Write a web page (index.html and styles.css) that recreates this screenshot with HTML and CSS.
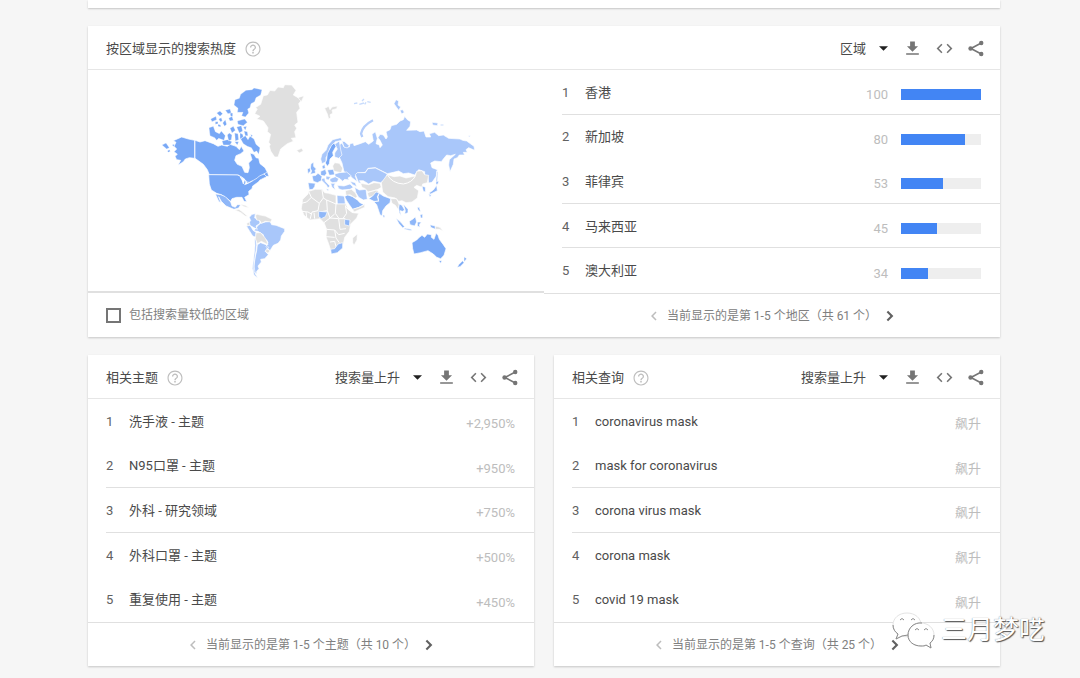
FILE: index.html
```html
<!DOCTYPE html>
<html lang="zh-CN">
<head>
<meta charset="utf-8">
<meta name="viewport" content="width=device-width, initial-scale=1">
<title>搜索热度</title>
<link rel="stylesheet" href="styles.css">
</head>
<body>
<svg class="sprite" aria-hidden="true">
  <symbol id="help" viewBox="0 0 24 24"><path d="M11 18h2v-2h-2v2zm1-16C6.480 2 2 6.480 2 12s4.480 10 10 10 10-4.480 10-10S17.520 2 12 2zm0 18.500c-4.700 0-8.500-3.800-8.500-8.500s3.800-8.500 8.500-8.500 8.500 3.800 8.500 8.500-3.800 8.500-8.500 8.500zM12 6c-2.210 0-4 1.790-4 4h1.700c0-1.300 1-2.300 2.300-2.300s2.300 1 2.300 2.300c0 2-3.100 1.750-3.100 5h1.700c0-2.250 3.100-2.500 3.100-5 0-2.210-1.790-4-4-4z"/></symbol>
  <symbol id="download" viewBox="0 0 24 24"><path d="M19 9h-4V3H9v6H5l7 7 7-7zM4 18v2h16v-2H4z"/></symbol>
  <symbol id="code" viewBox="0 0 24 24"><path d="M9.400 16.600L4.800 12l4.600-4.600L8 6l-6 6 6 6 1.400-1.400zm5.200 0l4.600-4.600-4.600-4.600L16 6l6 6-6 6-1.400-1.400z"/></symbol>
  <symbol id="share" viewBox="0 0 24 24"><path d="M5 12L18 5M5 12l13 7" fill="none" stroke="currentColor" stroke-width="2"/><circle cx="18" cy="5" r="2.800"/><circle cx="4.500" cy="12" r="2.800"/><circle cx="18" cy="19" r="2.800"/></symbol>
  <symbol id="prev" viewBox="0 0 24 24"><path d="M15.400 7.400L14 6l-6 6 6 6 1.400-1.400-4.600-4.600z"/></symbol>
  <symbol id="next" viewBox="0 0 24 24"><path d="M9.500 5L7.500 7l5 5-5 5 2 2 7-7z"/></symbol>
  <symbol id="caret" viewBox="0 0 10 5"><path d="M0 0h10L5 5z"/></symbol>
</svg>

<main class="page">
  <section class="card card-tail"></section>

  <section class="card">
    <header class="card-head">
      <h2>按区域显示的搜索热度</h2>
      <button class="help" aria-label="帮助"><svg><use href="#help"/></svg></button>
      <div class="tools">
        <span class="picker"><select aria-label="区域"><option>区域</option></select><svg><use href="#caret"/></svg></span>
        <button class="icon" aria-label="下载"><svg><use href="#download"/></svg></button>
        <button class="icon" aria-label="嵌入"><svg><use href="#code"/></svg></button>
        <button class="icon" aria-label="分享"><svg><use href="#share"/></svg></button>
      </div>
    </header>
    <div class="region">
      <div class="map">
        <svg viewBox="-186 -17 1368 663" role="img" aria-label="世界地图">
          <!-- North America and Greenland -->
          <g class="hi">
            <path d="M72 212L78 200 70 195 95 184 115 190 134 194V248L118 246 106 250 100 258 84 269 92 254 80 252 75 242 82 236 72 228 80 220z"/>
            <path d="M135 194L150 199 165 195 190 204 204 212 215 208 232 212 240 206 258 212 268 222 274 212 282 226 272 234 258 240 254 254 262 266 276 272 284 290 294 291 298 276 296 262 306 252 300 232 312 236 318 246 326 248 330 264 345 276 352 290 340 296 345 300 318 314 294 325 285 312 265 298 178 297 172 282 160 266 135 248z"/>
            <g class="isles">
              <path d="M272 190L286 180 294 192 300 182 312 190 318 206 330 216 326 236 320 226 312 230 304 216 292 212 280 204z"/>
              <path d="M252 88L255 72 268 68 272 56 288 44 306 42 312 37 336 42 332 58 318 66 314 78 303 84 300 96 293 100 296 112 286 124 275 120 279 110 262 110 264 98z"/>
              <path d="M177 156L190 152 196 168 208 174 214 166 226 180 222 194 206 188 200 194 194 186 180 180z"/>
              <path d="M200 112l10-6 8 8-8 8zM182 130l16-8 2 10-14 6zM206 130l8-4 3 10-6 2zM226 104l14-4 4 12-10 2zM218 142l8-10 4 14-6 6zM236 128l10-6 4 12-10 2zM240 112l8 0 0 10-6 0zM262 136l22-6 8 10-12 10-16-4zM240 158l10-6 6 12-10 8zM260 154l14-4 4 16-10 6zM232 178l6-6 8 6-2 14-8 4zM254 172l10 2 2 18-10 4zM280 154l10-2-4 12zM254 198l12 0-4 10zM204 146l8 2 0 6-8-2zM196 138l8 0 0 6-8 2zM282 166l10 2 2 12-8 0zM216 196l16-4 14 6-6 10-20 0zM270 172l8 4 2 8-10 6zM298 320l-10-4M346 292l6-2 4 12-14-2zM302 176l6 4-4 4z"/>
              <path d="M36 208l12-6 10 14-8 4zM52 226l6-4 3 5-6 3zM66 208l6-2 2 8z"/>
            </g>
          </g>
          <path class="no" d="M314 114L322 100 316 96 332 86 340 60 352 58 360 44 374 46 384 34 400 36 404 27 425 28 438 44 430 58 444 66 462 64 446 84 450 98 440 110 444 140 434 148 440 158 434 168 438 186 424 188 430 197 412 204 392 220 384 244 374 244 362 226 358 212 361 206 356 200 362 176 352 168 354 156 340 136 320 130 330 122zM440 224l15-6 5 8-12 6z"/>
          <g transform="translate(0 285)">
            <path class="hi" d="M176 12L262 13 274 18 282 24 288 34 284 42 298 36 322 22 328 16 342 10 350 18 330 28 325 34 308 46 306 54 296 62 297 72 284 80 290 93 282 92 276 80 260 80 246 84 242 92 226 80 214 72 200 68 184 58 178 40z"/>
            <path class="lake" d="M270 18l14 8-4 14-4-12zM288 40l20-10"/>
            <path class="mid" d="M196 70L212 72 226 78 242 94 246 106 256 110 262 102 272 102 266 112 252 116 228 106 214 92 206 78 213 97 206 92z"/>
            <path class="no" d="M253 117l14-1 8 6 10 8 8 7-8-1-12-10zM270 101l16 3 12 8-16-4z"/>
            <path class="low" d="M298 140L306 131 316 129 314 142 328 146 330 158 318 166 322 176 310 170 300 164 296 156 302 150zM332 158L346 154 360 152 365 162 378 164 404 174 404 182 394 196 392 208 384 218 370 224 360 240 348 228 354 216 350 208 342 204 340 192 324 182 312 180 320 170 324 164zM289 166L300 164 310 180 318 184 318 200 308 196 298 180zM322 222L332 216 348 222 356 230 346 242 355 252 344 264 332 266 334 274 324 286 327 294 320 302 320 310 310 302 314 266 320 240zM314 204l4 0 2 20-8 62 4 24 8 13-12-10-5-20 4-28 4-40z"/>
            <path class="no" d="M316 134L322 131 334 134 346 136 366 146 362 154 346 152 334 158 330 150 320 148zM318 186L332 186 344 200 350 210 354 222 342 216 334 212 322 219 316 204zM350 234l10 6-6 8-8-6zM290 158l8-4 2 8-8 4z"/>
          </g>

          <!-- Arctic coast, Russia and Nordic countries -->
          <g transform="translate(450 0)">
            <path class="low" d="M116 240L120 222 114 210 126 202 132 214 148 214 150 204 160 202 162 210 180 204 196 198 206 206 220 196 216 176 226 168 232 188 228 204 238 208 240 216 247 208 240 194 234 186 240 176 250 178 258 190 262 184 258 168 270 162 274 150 290 146 300 136 310 132 314 122 322 132 332 138 330 152 320 164 350 163 360 168 372 166 378 184 392 184 388 174 404 170 416 180 430 178 446 188 480 190 488 194 500 196 522 212 524 224 506 216 498 222 502 230 490 230 494 238 478 238 472 246 462 250 460 266 450 288 446 268 448 252 466 236 452 240 440 238 430 250 424 258 404 256 392 262 396 276 412 282 410 300 396 320 386 322 384 304 374 300 374 288 356 282 344 298 326 292 310 294 296 286 280 290 262 294 246 286 226 276 204 278 196 290 172 292 166 302 172 318 158 308 150 300 132 288 126 262zM282 84l6-12 8 4-2 12 8 6-6 10zM300 104l8-2 5 8-8 5zM396 140l18 2-2 8-14-2zM422 146l8 0 0 4-8 0zM504 180l7 0-2 4zM410 286l4 2-2 36-4-6z"/>
            <path class="coast" d="M187 184L183 174Q188 150 219 134"/>
            <path class="dots" d="M162 84l10-2M178 86l14-4M186 76l6-6M194 86l4-6M202 78l10 2"/>
            <path class="no" d="M74 98l12-6 4 10 6-8 16-3-2 8-14 4 2 10-8 4 2 10-6 2-4-14zM-6 66l18-6-8 18z"/>
            <path class="low" d="M62 250L66 236 78 224 84 208 98 192 122 186 126 194 106 198 90 218 86 234 78 246 78 258 66 264zM104 206L118 196 122 222 126 238 116 248 104 244 104 232 112 220zM126 196L134 198 148 210 142 217 132 214z"/>
            <path class="hi" d="M80 252L82 234 94 210 102 202 108 212 98 230 100 240 90 250 88 264 82 272 76 262z"/>
            <path class="mid" d="M33 264l8-4 0 12 8 8-4 4 2 8-16 4 4-10-4-8zM22 280l8-4 2 10-8 8zM66 272l8-6 2 12-8 2z"/>
          </g>

          <!-- Europe, Africa, Asia and Oceania -->
          <g transform="translate(450 255)">
            <path class="no" d="M98 16L104 6 118 8 128 22 124 36 102 32z"/>
            <path class="mid" d="M24 66L46 68 44 78 38 86 28 87zM36 46L48 44 54 38 66 46 64 60 52 66 40 62zM62 32L76 26 80 38 74 46 62 44zM82 28l18-2 4 16-16 2z"/>
            <path class="low" d="M64 54L74 52 76 62 90 76 84 82 78 72 66 60zM78 46L92 48 86 58 78 56zM90 54L106 48 116 54 112 64 98 66 90 62zM92 68l14 0-4 8 4 12-10-8zM104 40L118 36 140 34 154 46 144 52 148 58 134 56 128 62 120 54 106 48zM166 42L172 36 196 36 204 24 226 22 246 32 262 40 256 56 242 66 220 62 206 70 190 60 178 60 184 68 176 66zM112 74L132 76 150 70 160 80 150 86 126 88 116 84zM150 62l16 4 4 12-12-6zM164 80L178 88 198 86 202 116 190 118 176 110 168 96zM111 104L132 106 134 112 136 130H112zM78 84l8 2-2 6z"/>
            <path class="mid" d="M134 108L142 102 158 108 172 118 180 126 192 132 176 140 158 146 148 132 140 120z"/>
            <path class="no" d="M136 90L154 86 166 96 172 108 166 112 150 102 138 104zM158 146l20-6 14-8 2-6 0 14-32 14zM182 68L206 72 222 66 240 68 244 80 234 86 222 90 204 94 196 84 186 80zM202 96L228 88 236 92 222 106 206 110zM244 66L262 42 282 48 300 46 318 52 346 46 350 32 366 30 374 42 386 44 382 66 368 70 366 80 350 74 342 80 356 90 352 112 336 124 318 126 306 120 296 122 286 112 264 108 248 94zM272 114L290 114 298 132 294 146 286 134 276 128zM8 116L24 100 26 92 46 86 66 86 74 96 86 98 108 104V130L138 130 144 146 158 156 176 158 170 172 152 190 148 212 134 230 130 250 118 266 92 268 86 250 78 228 80 206 72 186 60 174 30 178 12 164 4 144zM158 232L172 220 171 238 162 254 158 246z"/>
            <path class="line" d="M26 92L34 110 20 124 4 128M34 110L58 128 54 150 36 154 30 176M66 88L70 112 58 128M70 112L80 118 108 130M80 118L82 150 58 154M108 130L106 158 116 172M82 150L90 172 104 160M136 134L140 158 130 172M72 186L90 172 116 174 136 174M80 206L104 208 116 222 134 218M78 228L104 230M104 208L108 232 118 246M116 174L120 206 138 204M90 244L104 242 108 258M138 140L158 156M5 152L24 154 34 160M18 154L20 170M42 156L44 174M262 42Q276 68 310 70 336 66 346 46"/>
            <path class="mid" d="M206 114L218 106 228 94 238 96 232 108 236 122 222 122zM238 98L250 106 272 114 270 126 258 136 248 150 246 166 240 162 234 144 230 132 222 124 236 120 234 108zM56 152L82 154 76 168 64 174 56 168zM134 176L150 178 148 196 134 192zM92 266L104 264 114 250 128 246 128 262 112 276 94 280zM248 162l5 2 2 6-5 0zM298 130L306 134 314 148 308 152 300 150 304 166 298 156 296 142zM310 130L324 146 324 156 314 160 316 150zM352 140l6 0 4 14-8-6zM360 162l8-2 0 12-6 0zM288 172L302 184 314 198 308 202 296 188zM312 202l22 4 0 4-20-4zM328 182L340 174 346 168 350 184 344 196 330 192zM352 184l12 0-6 8 2 8-8-4zM390 192l16 4 0 10-14-6zM366 76L376 80 376 94 370 92zM408 62L416 62 414 70 408 72zM410 74L412 90 392 100 386 98 400 88zM386 100l8 2-4 8z"/>
            <path class="no" d="M406 196L420 200 430 212 418 206 406 206z"/>
            <path class="hi" d="M336 246L350 238 358 230 366 224 374 230 382 220 394 222 394 230 402 236 408 218 414 224 418 236 430 252 438 264 432 284 422 294 410 290 400 280 384 270 362 276 342 280 338 264zM416 300l10 0-4 8zM492 288l8 6-8 10 0-8zM488 300L492 306 480 318 472 320 476 312z"/>
          </g>
        </svg>
      </div>
      <ol class="rows bars">
        <li><span class="rank">1</span><a href="#">香港</a><span class="value">100</span><span class="bar"><i style="width:100%"></i></span></li>
        <li class="open"><span class="rank">2</span><a href="#">新加坡</a><span class="value">80</span><span class="bar"><i style="width:80%"></i></span></li>
        <li><span class="rank">3</span><a href="#">菲律宾</a><span class="value">53</span><span class="bar"><i style="width:53%"></i></span></li>
        <li><span class="rank">4</span><a href="#">马来西亚</a><span class="value">45</span><span class="bar"><i style="width:45%"></i></span></li>
        <li><span class="rank">5</span><a href="#">澳大利亚</a><span class="value">34</span><span class="bar"><i style="width:34%"></i></span></li>
      </ol>
    </div>
    <footer class="card-foot split">
      <label class="check"><input type="checkbox">包括搜索量较低的区域</label>
      <nav class="pager"><button aria-label="上一页" disabled><svg><use href="#prev"/></svg></button><span>当前显示的是第 1-5 个地区（共 61 个）</span><button aria-label="下一页"><svg><use href="#next"/></svg></button></nav>
    </footer>
  </section>

  <div class="pair">
    <section class="card">
      <header class="card-head">
        <h2>相关主题</h2>
        <button class="help" aria-label="帮助"><svg><use href="#help"/></svg></button>
        <div class="tools">
          <span class="picker"><select aria-label="主题排序"><option>搜索量上升</option></select><svg><use href="#caret"/></svg></span>
          <button class="icon" aria-label="下载"><svg><use href="#download"/></svg></button>
          <button class="icon" aria-label="嵌入"><svg><use href="#code"/></svg></button>
          <button class="icon" aria-label="分享"><svg><use href="#share"/></svg></button>
        </div>
      </header>
      <ol class="rows">
        <li class="open"><span class="rank">1</span><a href="#">洗手液 - 主题</a><span class="value">+2,950%</span></li>
        <li><span class="rank">2</span><a href="#">N95口罩 - 主题</a><span class="value">+950%</span></li>
        <li><span class="rank">3</span><a href="#">外科 - 研究领域</a><span class="value">+750%</span></li>
        <li class="open"><span class="rank">4</span><a href="#">外科口罩 - 主题</a><span class="value">+500%</span></li>
        <li><span class="rank">5</span><a href="#">重复使用 - 主题</a><span class="value">+450%</span></li>
      </ol>
      <footer class="card-foot">
        <nav class="pager"><button aria-label="上一页" disabled><svg><use href="#prev"/></svg></button><span>当前显示的是第 1-5 个主题（共 10 个）</span><button aria-label="下一页"><svg><use href="#next"/></svg></button></nav>
      </footer>
    </section>

    <section class="card">
      <header class="card-head">
        <h2>相关查询</h2>
        <button class="help" aria-label="帮助"><svg><use href="#help"/></svg></button>
        <div class="tools">
          <span class="picker"><select aria-label="查询排序"><option>搜索量上升</option></select><svg><use href="#caret"/></svg></span>
          <button class="icon" aria-label="下载"><svg><use href="#download"/></svg></button>
          <button class="icon" aria-label="嵌入"><svg><use href="#code"/></svg></button>
          <button class="icon" aria-label="分享"><svg><use href="#share"/></svg></button>
        </div>
      </header>
      <ol class="rows">
        <li class="open"><span class="rank">1</span><a href="#">coronavirus mask</a><span class="value">飙升</span></li>
        <li><span class="rank">2</span><a href="#">mask for coronavirus</a><span class="value">飙升</span></li>
        <li><span class="rank">3</span><a href="#">corona virus mask</a><span class="value">飙升</span></li>
        <li class="open"><span class="rank">4</span><a href="#">corona mask</a><span class="value">飙升</span></li>
        <li><span class="rank">5</span><a href="#">covid 19 mask</a><span class="value">飙升</span></li>
      </ol>
      <footer class="card-foot">
        <nav class="pager"><button aria-label="上一页" disabled><svg><use href="#prev"/></svg></button><span>当前显示的是第 1-5 个查询（共 25 个）</span><button aria-label="下一页"><svg><use href="#next"/></svg></button></nav>
      </footer>
    </section>
  </div>
</main>

<div class="watermark">
  <svg viewBox="0 0 44 38" aria-hidden="true">
    <path class="bubble" d="M15 2C7 2 1 7 1 14c0 4 2 7 5 9l-2 5 6-3c3 1 7 1 10 0 6-2 9-6 9-11C29 7 23 2 15 2z"/>
    <path class="bubble" d="M29 12c-7 0-13 5-13 12s6 11 13 11c2 0 4 0 5-1l5 3-1-5c3-2 4-5 4-8 0-7-6-12-13-12z"/>
    <path class="edge" d="M1 14c0 4 2 7 5 9l-2 5 6-3 6-1M30 12c-8-1-14 5-14 12s6 11 13 11c2 0 4 0 5-1l5 3-1-5c3-2 4-5 4-8M8 9q2-3 4 0M19 9q2-3 4 0M23 19q2-3 4 0M32 19q2-3 4 0"/>
  </svg>
  <span>三月梦呓</span>
</div>
</body>
</html>
```
FILE: styles.css
```css
* { box-sizing: border-box; }

body {
  margin: 0;
  background: #f6f6f6;
  color: #616161;
  font: 13px/20px Roboto, "Noto Sans CJK SC", sans-serif;
  position: relative;
}

.sprite { position: absolute; width: 0; height: 0; }
svg { display: block; fill: currentColor; }
button { padding: 0; border: 0; background: none; color: inherit; font: inherit; }
a { color: inherit; text-decoration: none; }

.page {
  display: flex;
  flex-direction: column;
  gap: 18px;
  padding: 0 80px 12px 88px;
}

.card {
  min-width: 0;
  background: #fff;
  box-shadow: 0 1px 2px rgba(0, 0, 0, 0.2);
}
.card-tail { height: 8px; }
.pair { display: grid; grid-template-columns: 1fr 1fr; gap: 20px; }

.card-head {
  display: flex;
  align-items: center;
  height: 44px;
  padding: 2px 12px 0 18px;
  border-bottom: 1px solid #e6e6e6;
}
.card-head h2 { margin: 0; font-size: 13px; font-weight: 400; color: #4a4a4a; }
.help { margin-left: 8px; color: #bdbdbd; }
.help svg { width: 18px; height: 18px; }

.tools { display: flex; align-items: center; gap: 8px; margin-left: auto; }
.picker { position: relative; margin-right: 4px; }
.picker select {
  display: block;
  appearance: none;
  margin: 0;
  padding: 0 21px 0 0;
  border: 0;
  background: none;
  color: #4a4a4a;
  font: inherit;
}
.picker svg {
  position: absolute;
  right: 0;
  top: 7px;
  width: 9px;
  height: 5px;
  color: #212121;
  pointer-events: none;
}
.icon { display: grid; place-items: center; width: 24px; height: 24px; color: #757575; }
.icon svg { width: 19px; height: 19px; }

.region { display: grid; grid-template-columns: 1fr 1fr; }
.map { border-bottom: 2px solid #e0e0e0; }
.map svg { width: 100%; height: auto; stroke: #fff; stroke-width: 2; stroke-linejoin: round; }
.hi { fill: #78a8f6; }
.isles { stroke-width: 1; }
.mid { fill: #8fb7f8; }
.low { fill: #a9c7fa; }
.no { fill: #e0e0e0; }
.lake { fill: #fff; }
.line { fill: none; stroke-width: 3; }
.coast { fill: none; stroke: #b3cdfb; stroke-width: 7; }
.dots { fill: none; stroke: #c9dcfc; stroke-width: 4; }

.rows {
  display: grid;
  grid-template-rows: repeat(5, 1fr);
  min-height: 223px;
  margin: 0;
  padding: 0 0 0 18px;
  list-style: none;
}
.rows li {
  display: flex;
  align-items: center;
  padding: 2px 19px 0 0;
  border-bottom: 1px solid #e0e0e0;
}
.rows li.open, .rows li:last-child { border-bottom-color: transparent; }
.rank { width: 23px; }
.rows a { flex: 1; color: #4a4a4a; }
.value { padding-top: 5px; color: #bdbdbd; }
.bar { width: 80px; height: 11px; margin: 4px 0 0 13px; background: #eee; }
.bar i { display: block; height: 100%; background: #4285f4; }

.card-foot {
  display: grid;
  align-items: center;
  height: 44px;
  border-top: 1px solid #e0e0e0;
  color: #808080;
  font-size: 12px;
}
.split { grid-template-columns: 1fr 1fr; border-top: 0; }
.split .pager { height: 100%; border-top: 1px solid #e0e0e0; }
.check { display: flex; align-items: center; gap: 8px; padding-left: 18px; }
.check input {
  appearance: none;
  width: 15px;
  height: 15px;
  margin: 0;
  border: 2px solid #757575;
}
.pager { display: flex; align-items: center; justify-content: center; gap: 4px; }
.pager svg { width: 18px; height: 18px; }
.pager button { color: #616161; }
.pager button:disabled { color: #bdbdbd; }

.watermark {
  position: absolute;
  right: 35px;
  bottom: 29px;
  display: flex;
  align-items: center;
  gap: 5px;
  color: #fff;
  font-size: 26px;
  line-height: 38px;
  text-shadow: 1px 1px 1px #555, 0 0 1px #777;
}
.watermark svg { width: 44px; height: 38px; }
.bubble { fill: #fff; stroke: #e4e4e4; }
.edge { fill: none; stroke: #8a8a8a; }
```
